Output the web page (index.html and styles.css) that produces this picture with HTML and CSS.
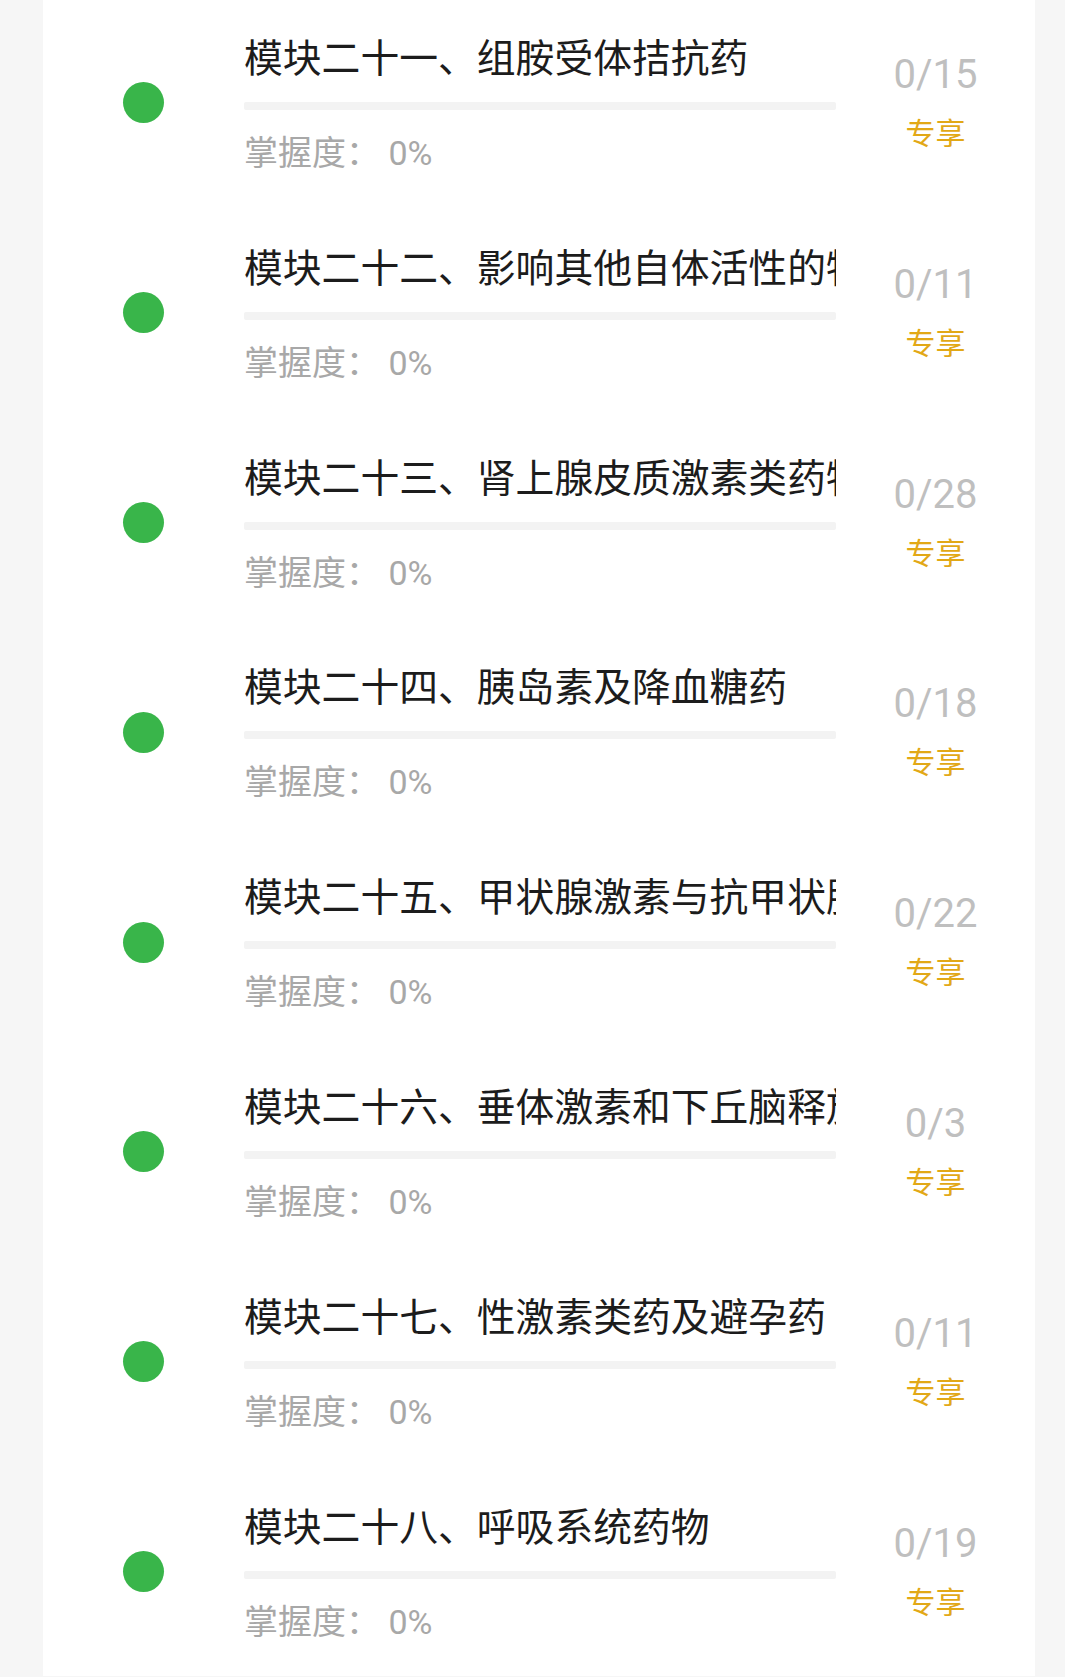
FILE: index.html
```html
<!DOCTYPE html>
<html lang="zh-CN">
<head>
    <meta charset="UTF-8">
    <meta name="viewport" content="width=device-width, initial-scale=1.0">
    <title>模块列表</title>
    <link rel="stylesheet" href="styles.css">
</head>
<body>
    <!-- module list card -->
    <div class="card">
        <ul class="module-list">
            <li class="module">
                <span class="dot"></span>
                <div class="module-main">
                    <div class="module-title">模块二十一、组胺受体拮抗药</div>
                    <div class="progress"></div>
                    <div class="mastery">掌握度： 0%</div>
                </div>
                <div class="module-side">
                    <div class="count">0/15</div>
                    <div class="tag">专享</div>
                </div>
            </li>
            <li class="module">
                <span class="dot"></span>
                <div class="module-main">
                    <div class="module-title">模块二十二、影响其他自体活性的物</div>
                    <div class="progress"></div>
                    <div class="mastery">掌握度： 0%</div>
                </div>
                <div class="module-side">
                    <div class="count">0/11</div>
                    <div class="tag">专享</div>
                </div>
            </li>
            <li class="module">
                <span class="dot"></span>
                <div class="module-main">
                    <div class="module-title">模块二十三、肾上腺皮质激素类药物</div>
                    <div class="progress"></div>
                    <div class="mastery">掌握度： 0%</div>
                </div>
                <div class="module-side">
                    <div class="count">0/28</div>
                    <div class="tag">专享</div>
                </div>
            </li>
            <li class="module">
                <span class="dot"></span>
                <div class="module-main">
                    <div class="module-title">模块二十四、胰岛素及降血糖药</div>
                    <div class="progress"></div>
                    <div class="mastery">掌握度： 0%</div>
                </div>
                <div class="module-side">
                    <div class="count">0/18</div>
                    <div class="tag">专享</div>
                </div>
            </li>
            <li class="module">
                <span class="dot"></span>
                <div class="module-main">
                    <div class="module-title">模块二十五、甲状腺激素与抗甲状腺</div>
                    <div class="progress"></div>
                    <div class="mastery">掌握度： 0%</div>
                </div>
                <div class="module-side">
                    <div class="count">0/22</div>
                    <div class="tag">专享</div>
                </div>
            </li>
            <li class="module">
                <span class="dot"></span>
                <div class="module-main">
                    <div class="module-title">模块二十六、垂体激素和下丘脑释放</div>
                    <div class="progress"></div>
                    <div class="mastery">掌握度： 0%</div>
                </div>
                <div class="module-side">
                    <div class="count">0/3</div>
                    <div class="tag">专享</div>
                </div>
            </li>
            <li class="module">
                <span class="dot"></span>
                <div class="module-main">
                    <div class="module-title">模块二十七、性激素类药及避孕药</div>
                    <div class="progress"></div>
                    <div class="mastery">掌握度： 0%</div>
                </div>
                <div class="module-side">
                    <div class="count">0/11</div>
                    <div class="tag">专享</div>
                </div>
            </li>
            <li class="module">
                <span class="dot"></span>
                <div class="module-main">
                    <div class="module-title">模块二十八、呼吸系统药物</div>
                    <div class="progress"></div>
                    <div class="mastery">掌握度： 0%</div>
                </div>
                <div class="module-side">
                    <div class="count">0/19</div>
                    <div class="tag">专享</div>
                </div>
            </li>
        </ul>
    </div>
</body>
</html>
```

FILE: styles.css
```css
body {
    margin: 0;
    background: #f6f6f6;
    font-family: Roboto, "Noto Sans CJK SC", sans-serif;
    overflow: hidden;
}

.card {
    margin-left: 43px;
    width: 992px;
    min-height: 1677px;
    background: #fff;
}

.module-list {
    list-style: none;
    margin: -2px 0 0 0;
    padding: 0;
}

.module {
    display: flex;
    align-items: flex-start;
    height: 209.8px;
}

.dot {
    align-self: center;
    flex: none;
    width: 41px;
    height: 41px;
    margin-left: 80px;
    border-radius: 50%;
    background: #39b54a;
}

.module-main {
    flex: none;
    width: 592px;
    margin-left: 80px;
    padding-top: 38px;
}

.module-title {
    font-size: 38.8px;
    line-height: 46px;
    color: #1c1c1c;
    white-space: nowrap;
    overflow: hidden;
}

.progress {
    height: 8px;
    margin-top: 20px;
    border-radius: 2px;
    background: #f3f3f3;
}

.mastery {
    margin-top: 23px;
    font-size: 34px;
    line-height: 40px;
    color: #a8a8a8;
}

.module-side {
    flex: 1;
    padding-top: 53px;
    text-align: center;
}

.count {
    font-size: 40px;
    line-height: 48px;
    color: #bfbfbf;
}

.tag {
    margin-top: 17px;
    font-size: 30px;
    line-height: 36px;
    color: #e2a816;
}
```
